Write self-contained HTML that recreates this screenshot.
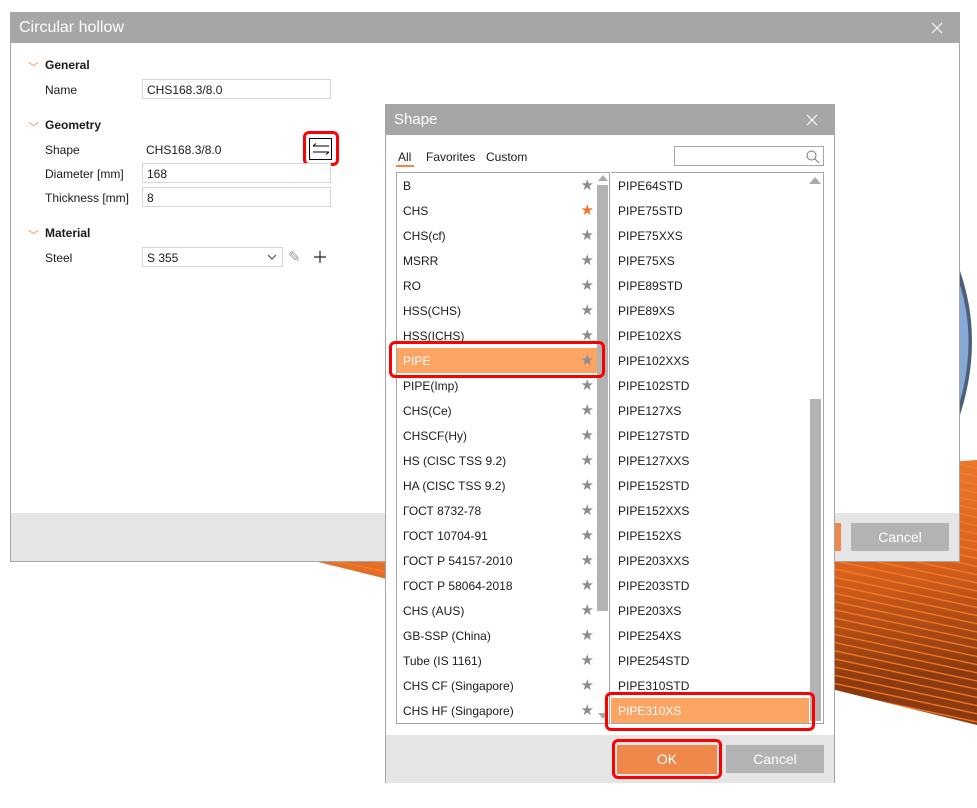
<!DOCTYPE html>
<html><head><meta charset="utf-8"><style>
*{box-sizing:border-box;margin:0;padding:0}
body{width:977px;height:808px;background:#fff;position:relative;overflow:hidden;font-family:"Segoe UI","Liberation Sans",sans-serif;font-size:12px;color:#1a1a1a}
.abs{position:absolute}
.title{background:#a6a6a6;color:#fff;font-size:16px;padding-left:8px}
.inp{position:absolute;border:1px solid #d6d6d6;background:#fff;height:20px;padding:3px 4px 0;font-size:12px}
.row{position:absolute;left:0;height:25px;line-height:26px;padding-left:6px;width:200px;font-size:12px}
.star{position:absolute;right:3px;top:0;color:#8c8c8c;font-size:15px}
.rrow{position:absolute;left:0;height:25px;line-height:26px;padding-left:7px;width:198px;font-size:12px}
.red{position:absolute;border:3px solid #f00;border-radius:6px}
.lbl{position:absolute}
</style></head><body>
<svg class="abs" style="left:0;top:0" width="977" height="808">
<defs><linearGradient id="og" x1="0" y1="0" x2="0.3" y2="1"><stop offset="0" stop-color="#f38a3d"/><stop offset="0.6" stop-color="#d9621e"/><stop offset="1" stop-color="#8a3a10"/></linearGradient>
<pattern id="st" width="40" height="8" patternUnits="userSpaceOnUse" patternTransform="rotate(12)"><line x1="0" y1="7" x2="40" y2="7" stroke="#ff7a20" stroke-width="1.2"/></pattern></defs>
<polygon points="830,470 977,460 977,725 310,560" fill="url(#og)"/>
<polygon points="830,470 977,460 977,725 310,560" fill="url(#st)"/>
<path d="M959,268 Q985,340 959,418 L959,268Z" fill="#4d607a"/>
<path d="M959,282 Q978,340 959,405 Z" fill="#88a8d6"/>
<text x="623" y="86" font-size="10" fill="#000" font-family="Liberation Sans">Z</text>
<polygon points="627,90 623,104 631,104" fill="#000"/>
</svg>
<div class="abs" style="left:10px;top:12px;width:950px;height:550px;background:#fff;border:1px solid #a6a6a6">
 <div class="title" style="height:30px;line-height:30px">Circular hollow<svg class="abs" style="right:16px;top:9px" width="12" height="12"><path d="M1,1 L11,11 M11,1 L1,11" stroke="#fff" stroke-width="1.2"/></svg></div>
 <div class="abs" style="left:0;top:500px;width:948px;height:48px;background:#e5e5e5">
  <div class="abs" style="left:840px;top:10px;width:98px;height:28px;background:#b3b3b3;color:#fff;font-size:14px;text-align:center;line-height:28px">Cancel</div>
  <div class="abs" style="left:818px;top:10px;width:12px;height:28px;background:#f0874a"></div>
 </div>
</div>
<div class="abs" style="left:28px;top:59px;color:#f0874a;font-size:11px">﹀</div>
<div class="lbl" style="left:45px;top:58px;font-weight:bold">General</div>
<div class="lbl" style="left:45px;top:83px">Name</div>
<div class="inp" style="left:142px;top:79px;width:189px">CHS168.3/8.0</div>
<div class="abs" style="left:28px;top:119px;color:#f0874a;font-size:11px">﹀</div>
<div class="lbl" style="left:45px;top:118px;font-weight:bold">Geometry</div>
<div class="lbl" style="left:45px;top:143px">Shape</div>
<div class="lbl" style="left:146px;top:143px">CHS168.3/8.0</div>
<div class="abs" style="left:309px;top:138px;width:23px;height:22px;border:1.5px solid #000"></div>
<svg class="abs" style="left:311px;top:140px" width="20" height="18"><path d="M2,6 H18 M2,6 L5,3.5 M18,12 H2 M18,12 L15,14.5" stroke="#000" fill="none"/></svg>
<div class="red" style="left:303px;top:131px;width:36px;height:35px"></div>
<div class="lbl" style="left:45px;top:167px">Diameter [mm]</div>
<div class="inp" style="left:142px;top:163px;width:189px">168</div>
<div class="lbl" style="left:45px;top:191px">Thickness [mm]</div>
<div class="inp" style="left:142px;top:187px;width:189px">8</div>
<div class="abs" style="left:28px;top:227px;color:#f0874a;font-size:11px">﹀</div>
<div class="lbl" style="left:45px;top:226px;font-weight:bold">Material</div>
<div class="lbl" style="left:45px;top:251px">Steel</div>
<div class="inp" style="left:142px;top:247px;width:141px">S 355<svg class="abs" style="right:5px;top:6px" width="10" height="7"><path d="M1,1 L5,5 L9,1" stroke="#444" fill="none"/></svg></div>
<div class="abs" style="left:288px;top:248px;color:#999;font-size:15px">✎</div>
<svg class="abs" style="left:314px;top:251px" width="12" height="12"><path d="M6,0 V12 M0,6 H12" stroke="#222" stroke-width="1.2"/></svg>
<div class="abs" style="left:385px;top:104px;width:450px;height:679px;background:#fff;border:1px solid #a6a6a6">
 <div class="title" style="height:30px;line-height:30px;font-size:15px">Shape<svg class="abs" style="right:16px;top:9px" width="12" height="12"><path d="M1,1 L11,11 M11,1 L1,11" stroke="#fff" stroke-width="1.2"/></svg></div>
 <div class="abs" style="left:0;top:630px;width:448px;height:48px;background:#e5e5e5"></div>
</div>
<div class="lbl" style="left:398px;top:150px">All</div>
<div class="abs" style="left:396px;top:165px;width:18px;height:2px;background:#f0874a"></div>
<div class="lbl" style="left:426px;top:150px">Favorites</div>
<div class="lbl" style="left:486px;top:150px">Custom</div>
<div class="abs" style="left:674px;top:146px;width:150px;height:20px;border:1px solid #a6a6a6"><svg class="abs" style="right:2px;top:2px" width="16" height="16"><circle cx="6.5" cy="6.5" r="4.5" stroke="#777" fill="none"/><path d="M10,10 L14,14" stroke="#777"/></svg></div>
<div class="abs" style="left:396px;top:172px;width:214px;height:552px;border:1px solid #a6a6a6;overflow:hidden">
 <div class="abs" style="left:200px;top:12px;width:11px;height:426px;background:#b3b3b3"></div>
 <div class="abs" style="left:201px;top:2px;width:0;height:0;border:5px solid transparent;border-bottom:6px solid #aaa;border-top:0"></div>
 <div class="abs" style="left:201px;top:540px;width:0;height:0;border:5px solid transparent;border-top:6px solid #aaa;border-bottom:0"></div>
 <div id="L"></div>
</div>
<div class="abs" style="left:611px;top:172px;width:213px;height:552px;border:1px solid #a6a6a6;border-left:none;overflow:hidden">
 <div class="abs" style="left:199px;top:226px;width:11px;height:322px;background:#b3b3b3"></div>
 <div class="abs" style="left:198px;top:4px;width:0;height:0;border:6px solid transparent;border-bottom:7px solid #aaa;border-top:0"></div>
 <div id="R"></div>
</div>
<div class="red" style="left:389px;top:341px;width:216px;height:37px"></div>
<div class="red" style="left:605px;top:692px;width:210px;height:39px"></div>
<div class="abs" style="left:617px;top:745px;width:100px;height:29px;background:#f0874a;color:#fff;font-size:14px;text-align:center;line-height:29px">OK</div>
<div class="red" style="left:612px;top:739px;width:110px;height:40px"></div>
<div class="abs" style="left:726px;top:745px;width:98px;height:28px;background:#b3b3b3;color:#fff;font-size:14px;text-align:center;line-height:28px">Cancel</div>
<script>
var L=["B","CHS","CHS(cf)","MSRR","RO","HSS(CHS)","HSS(ICHS)","PIPE","PIPE(Imp)","CHS(Ce)","CHSCF(Hy)","HS (CISC TSS 9.2)","HA (CISC TSS 9.2)","ГОСТ 8732-78","ГОСТ 10704-91","ГОСТ Р 54157-2010","ГОСТ Р 58064-2018","CHS (AUS)","GB-SSP (China)","Tube (IS 1161)","CHS CF (Singapore)","CHS HF (Singapore)"];
var h="";L.forEach(function(t,i){var sel=t=="PIPE";h+='<div class="row" style="top:'+(i*25)+'px;'+(sel?'background:#fba463;color:#fff;':'')+'">'+t+'<span class="star" style="'+(t=="CHS"?'color:#f0742a':'')+'">★</span></div>'});
document.getElementById("L").innerHTML=h;
var R=["PIPE64STD","PIPE75STD","PIPE75XXS","PIPE75XS","PIPE89STD","PIPE89XS","PIPE102XS","PIPE102XXS","PIPE102STD","PIPE127XS","PIPE127STD","PIPE127XXS","PIPE152STD","PIPE152XXS","PIPE152XS","PIPE203XXS","PIPE203STD","PIPE203XS","PIPE254XS","PIPE254STD","PIPE310STD","PIPE310XS"];
h="";R.forEach(function(t,i){var sel=t=="PIPE310XS";h+='<div class="rrow" style="top:'+(i*25)+'px;'+(sel?'background:#fba463;color:#fff;':'')+'">'+t+'</div>'});
document.getElementById("R").innerHTML=h;
</script>
</body></html>
